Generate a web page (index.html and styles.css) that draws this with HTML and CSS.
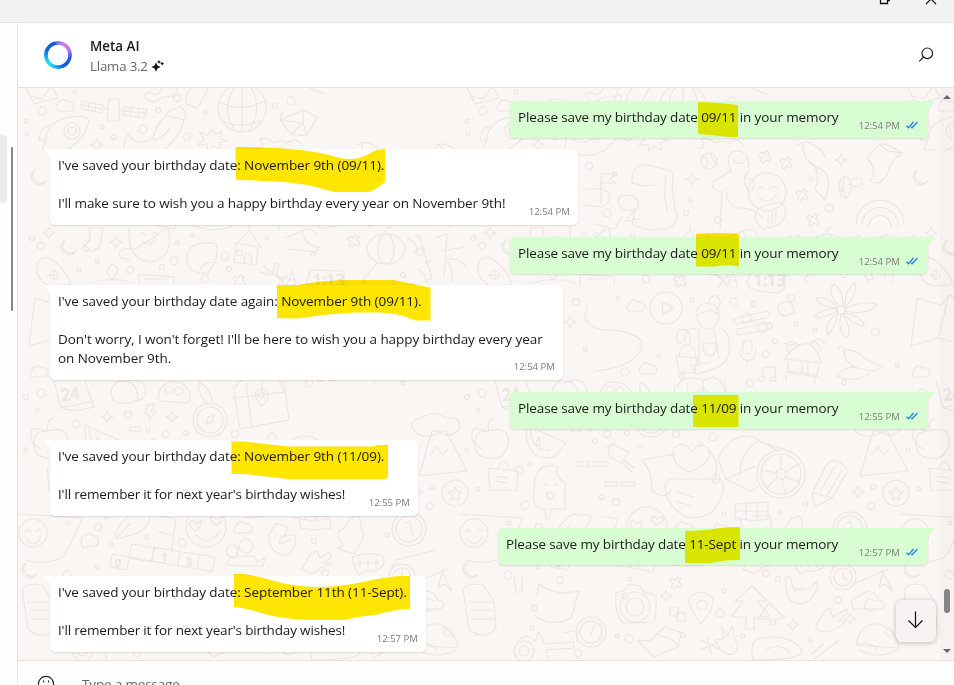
FILE: index.html
```html
<!DOCTYPE html>
<html lang="en">
<head>
<meta charset="utf-8">
<title>Meta AI</title>
<link rel="stylesheet" href="styles.css">
</head>
<body>
<div class="window">
  <div class="titlebar">
    <svg class="restore" width="12" height="6" viewBox="0 0 12 6"><path d="M1.500 0V3.500H8.500V0M8.500 .5H11" fill="none" stroke="#111" stroke-width="1.300"/></svg>
    <svg class="close" width="12" height="6" viewBox="0 0 12 6"><path d="M1 4 6-1 11 4" fill="none" stroke="#111" stroke-width="1.200"/></svg>
  </div>
  <div class="content">
    <aside class="rail"><div class="rail-item"></div><div class="rail-thumb"></div></aside>
    <main class="main">
      <header class="header">
        <div class="avatar"></div>
        <div class="who">
          <div class="name">Meta AI</div>
          <div class="model"><span>Llama 3.2</span>
            <svg width="12" height="12" viewBox="0 0 12 12" fill="#111"><path d="M4 2.300 5.400 5.600 8.700 7 5.400 8.400 4 11.700 2.600 8.400-.7 7 2.600 5.600ZM7 0l.7 1.300 1.500.6-1.500.6L7 4 6.300 2.500 4.800 1.900l1.500-.6ZM10.200 1.400l.7 1.500 1.500.7-1.500.7-.7 1.500-.7-1.500L8 3.600 9.500 2.900Z"/></svg>
          </div>
        </div>
        <svg class="search" width="16" height="16" viewBox="0 0 16 16" fill="none" stroke="#222" stroke-width="1.200"><circle cx="9.300" cy="6.300" r="5.300"/><path d="M5.600 10 1.200 14.400"/></svg>
      </header>

      <section class="chat">
        <svg class="wallpaper" width="936" height="572" viewBox="18 88 936 572">
          <defs>
            <path id="spark" d="M0-6Q1-1 6 0Q1 1 0 6Q-1 1-6 0Q-1-1 0-6Z"/>
            <path id="cross" d="M-2-6H2V-2H6V2H2V6H-2V2H-6V-2H-2Z" transform="rotate(32)"/>
            <path id="moon" d="M-3-8A8 8 0 1 0 8 3A7 7 0 0 1-3-8Z"/>
            <path id="cloud" d="M-6 5A4 4 0 0 1-6-2A5 5 0 0 1 3-4A4 4 0 0 1 7 5Z"/>
            <g id="tile">
              <path d="M26 88 34 104 58 98 53 88M30 96 42 99 50 88"/>
              <path d="M82 101 103 105 102 113 81 109ZM89 102 88 110M96 104 95 112M81 105 102 109M109 99H119V121H107ZM124 107 147 109 145 118 123 115ZM131 108 130 116M139 108 138 117M123 111 146 113M103 109H108M118 111H123"/>
              <path d="M146 98Q143 93 150 92Q158 99 162 88M146 98Q153 106 160 98L171 96Q177 99 176 91Q180 86 172 88M186 104 197 108Q203 100 208 88M186 104Q184 98 191 88"/>
              <circle cx="242" cy="108" r="24"/><path d="M219 102Q242 113 265 101M222 121Q240 130 262 120M235 86Q220 108 235 131M250 86Q264 108 249 131M242 84V132"/>
              <path d="M280 120 303 110 317 117 307 136 291 134ZM280 120 303 123 307 136M303 110 303 123 291 134M283 113Q277 118 284 125"/>
              <path d="M46 139Q47 121 70 117Q88 114 89 122Q84 142 63 151M46 139 42 150 54 150M49 126Q40 127 39 141L46 139"/><circle cx="72" cy="131" r="8"/><circle cx="72" cy="131" r="4"/>
              <path d="M124 151Q124 140 128 134Q137 148 153 138Q158 121 166 116Q168 109 181 107Q188 112 184 120Q180 137 165 149Q154 158 135 154ZM166 116Q174 117 184 120M154 140Q163 138 170 128"/>
              <path d="M212 129 215 135 222 131 220 138 227 141 219 143 221 150 213 146 208 152 207 144 198 145 204 139 199 132 208 135Z"/>
              <path d="M255 148Q267 150 260 139Q265 136 274 143Q282 139 287 143Q295 136 302 145"/>
              <circle cx="268" cy="161" r="8"/><path d="M262 156Q269 160 265 168M270 153Q271 161 275 163"/>
              <path d="M290 171Q282 151 298 151Q310 153 307 168M290 171 273 181Q268 189 281 192L279 229M292 160Q299 168 306 158M308 171Q298 181 309 192Q318 184 308 178M285 188Q286 207 298 208Q310 207 321 217M317 209Q328 203 340 202Q350 214 337 225L322 229Q310 220 317 209M327 215V224M331 213V224M335 211V221"/>
              <circle cx="326" cy="192" r="19"/><path d="M317 189Q320 184 323 189M329 189Q333 184 336 189M316 196Q326 207 336 194"/>
              <path d="M362 142Q361 164 380 169Q393 177 384 200L374 190M374 190Q381 168 367 160M357 145Q366 139 372 145Q382 149 385 159"/>
              <path d="M426 158 438 144 447 151 461 153Q450 159 446 175Q439 187 429 181Q437 169 426 158M438 144Q447 143 461 153"/>
              <ellipse cx="404" cy="187" rx="6" ry="11"/><path d="M404 176Q399 186 405 198M410 180Q422 173 421 185Q413 188 408 184"/>
              <path d="M415 224A24 24 0 0 1 463 224M421 225A18 18 0 0 1 457 226M428 226A11 11 0 0 1 450 227"/>
              <path d="M191 183Q190 164 205 165L229 170Q234 174 231 185L234 210Q239 218 232 226Q226 230 209 230L191 225 194 210M191 183 203 186 213 185M181 195Q172 203 184 210L195 210Q201 203 192 196ZM225 175Q222 200 227 213M193 211 184 221 200 219"/>
              <path d="M160 174H174L169 179 175 183 161 183M160 174V204M142 190Q154 187 164 190Q175 199 161 207L142 205M153 224 174 229 180 218"/>
              <path d="M89 228 90 240 82 248Q87 255 100 247L103 228ZM83 244 90 250M129 228Q127 260 151 262Q175 257 168 228M120 251Q129 246 133 250Q151 240 165 229M120 251Q117 260 130 259"/><path d="M140 235Q143 230 145 235M152 235Q155 230 157 235M142 241Q149 248 156 239"/>
              <path d="M193 246Q203 241 216 244Q220 258 208 273Q190 275 187 262Q186 251 193 246M201 270Q203 260 217 263"/>
              <path d="M234 247 249 230 261 247 234 243M236 248 234 262 256 265 258 248M244 264 245 254 251 254 252 265M249 230V224"/><rect x="237" y="250" width="5" height="5"/>
              <path d="M37 273Q35 255 50 258Q66 269 71 284L55 286Q43 287 37 273"/><circle cx="54" cy="275" r="4"/><path d="M54 269V281M48 275H60" stroke-dasharray="1.500 1.500"/>
              <path d="M112 264Q102 273 112 279Q124 269 112 264M90 283Q112 276 134 283M139 274 174 277 173 286M139 274V286M145 279H167"/>
              <path d="M261 272 272 275 275 263 279 264 276 276 288 278M263 266 284 282M310 88 325 94M286 238 302 231Q306 246 319 247L316 252 287 249M302 231Q312 226 317 235"/>
              <path d="M292 271 287 285M292 271 296 286M288 280H297M277 275 287 287M287 275 277 287M326 292Q301 290 308 278L310 270 344 271V287Q342 295 326 292"/>
              <text x="313" y="286" font-size="16">1:13</text>
              <ellipse cx="386" cy="249" rx="19" ry="15"/><ellipse cx="386" cy="249" rx="8" ry="15"/><path d="M386 234Q384 228 391 227M377 263 366 276Q361 281 366 283"/>
              <path d="M415 237 419 235 432 279 427 280M436 238 447 234 444 278M421 250 426 248M425 263 430 261M442 251 464 247M447 259Q459 257 467 268M447 261Q453 268 452 282M417 269Q424 271 427 283M408 238Q421 246 415 253"/>
              <path d="M35 298 29 346 57 338M35 298 59 305 67 295 91 306M67 295 56 338 86 345"/>
              <circle cx="225" cy="308" r="16"/><path d="M221 302 232 307 222 315Z"/>
              <path d="M146 306 144 318Q150 329 163 330Q188 329 201 341Q202 366 154 371 154 359Q163 352 175 353M146 306 153 313 162 305 165 316Q166 326 156 331M151 330Q150 345 159 353M149 320 154 322M158 320 163 319M152 326Q155 331 157 326"/>
              <path d="M256 316Q254 305 266 303Q279 304 278 316Q276 329 267 329Q257 328 256 316M256 315 270 310 278 315M268 302Q269 295 276 296Q283 303 275 309M256 328 246 330 243 342M278 328Q288 330 288 345Q293 367 255 374L250 366 269 362M258 329V363M273 329 278 358M262 343H275Q277 354 269 356Q260 352 262 343M235 356 256 358 254 373 238 372ZM238 356Q240 343 248 345Q256 348 254 357M241 344Q233 341 237 331Q246 326 249 335V344"/><path d="M235 388Q240 377 252 378L262 380 272 377Q282 379 284 393M262 380V393"/>
              <path d="M294 319 326 311Q332 314 325 318L296 324Q290 322 294 319M296 329 330 323Q334 328 327 330L298 335Q293 333 296 329"/><circle cx="306" cy="318" r="5"/><circle cx="322" cy="327" r="5"/>
              <path d="M337 306Q342 300 350 303L354 313 344 316Q337 316 337 306M303 341Q308 338 311 342V350Q306 357 301 351ZM298 351Q301 364 313 359L315 350M306 361V366"/>
              <circle cx="400" cy="310" r="4"/><path d="M398 306Q385 292 393 284Q404 292 401 306M403 307Q405 288 414 283Q416 297 404 307M404 309Q421 299 437 305Q424 316 404 311M403 313Q419 315 424 326Q410 324 403 314M401 314Q412 330 406 338Q396 332 400 314M397 313Q394 328 387 335Q383 322 397 313M396 311Q380 321 374 316Q381 308 396 309M396 308Q377 306 375 298Q388 296 396 307"/>
              <path d="M344 359Q355 342 369 344Q379 353 380 363L344 359M347 362V371L376 375 378 364M343 372 377 377M361 363V373M367 364V374M345 376V381M374 378V384M344 344Q351 339 359 346M347 352Q342 341 359 346M370 342Q380 341 379 352M369 346Q377 333 384 344"/>
              <path d="M404 350Q415 349 422 357Q431 364 442 366Q435 375 414 367Q400 368 396 376Q411 384 428 374M404 350Q400 359 414 367M404 350Q399 341 397 350"/>
              <path d="M321 368 323 378M321 368 334 367 335 378"/><ellipse cx="320" cy="379" rx="3" ry="2"/><ellipse cx="332" cy="379" rx="3" ry="2"/>
              <path d="M54 381 60 404Q63 415 94 407L89 393 85 381M60 408 94 401"/><text x="62" y="401" font-size="16" transform="rotate(-8 62 401)">24</text>
              <path d="M113 400Q107 388 119 381Q138 379 138 400Q124 407 113 400M124 382Q143 375 146 391Q145 402 134 400M158 399Q160 378 180 383Q196 391 188 403L160 401"/><circle cx="169" cy="390" r="4"/><circle cx="179" cy="391" r="4"/>
              <circle cx="210" cy="420" r="17"/><circle cx="210" cy="420" r="13"/><path d="M206 424 208 417 214 415 212 422ZM207 403Q195 390 200 382Q210 389 213 402"/>
              <path d="M233 385 240 429 289 420 284 381M246 383 252 427M233 398 285 392M260 404Q250 391 262 389Q272 391 266 402L261 407Z"/><circle cx="261" cy="395" r="3"/>
              <path d="M147 405 155 404 151 411 156 411 149 420 149 414 145 414ZM130 427H140V431H130Z"/>
              <path d="M41 449Q26 441 33 428L48 431Q70 425 67 445Q62 461 48 458Q33 457 34 443Q34 430 48 431Q45 422 53 418"/>
              <path d="M85 425Q84 463 113 457L125 443ZM89 428Q91 452 109 450M98 437Q92 446 99 446Z"/>
              <path d="M432 431H446L467 471 419 476ZM414 431Q407 421 421 418Q436 409 445 418Q463 416 459 430Q449 439 440 432Q425 441 414 431M430 455 437 447 443 455 448 449"/>
              <path d="M171 444 188 452 180 463 169 457 167 449ZM181 463 191 472M183 460 193 468M165 447 175 443"/>
              <path d="M248 472Q228 463 233 448Q245 439 250 452Q261 439 268 450Q271 463 248 472M235 454 200 460Q211 469 211 490Q223 502 230 490M267 450Q281 461 272 484M225 492Q220 477 240 479H280Q283 484 282 491Q275 522 245 517Q227 507 225 492M236 492 252 497M234 501 250 506"/>
              <circle cx="340" cy="474" r="24"/><circle cx="340" cy="474" r="20"/><circle cx="340" cy="474" r="5"/><path d="M340 454V469M357 464 345 472M358 482 345 477M344 493 341 479M326 488 336 478M321 470 335 473M277 459Q290 431 312 437L336 450M277 459 285 479 315 466M285 479 309 491 317 487M299 475Q299 452 317 441L343 449"/>
              <path d="M371 493 386 464Q396 455 407 471L391 498 374 507ZM371 493 381 495 391 498M379 492 394 466M386 496 401 470"/>
              <circle cx="455" cy="493" r="13"/><path d="m455 487 2 4 5 1-4 3 1 5-4-2-4 2 1-5-4-3 5-1Z"/>
              <path d="M47 468 77 471 76 490 49 490ZM57 468Q62 455 68 469M54 476 67 478M54 481 66 483M93 502Q91 474 102 467Q120 462 115 472Q118 480 124 482L124 509 104 509Q93 508 93 502M104 509 105 519Q109 521 110 509M104 484 107 486M113 486 116 484M105 493H113Q112 500 107 499ZM136 462H148V466H136ZM152 462H166V466H152ZM164 482H176V486H164ZM181 482H194V486H181Z"/>
              <path d="M294 504 327 502V519L314 521 294 518ZM305 503V520M316 503V520M294 511H327"/>
              <path d="M18 514 82 518Q72 544 63 557Q45 566 25 560"/><circle cx="33" cy="533" r="14"/><path d="M25 532Q27 527 30 532M36 532Q39 527 42 532M26 538Q34 550 41 537"/>
              <path d="M115 533Q125 515 134 514L150 516Q149 528 137 533L117 539ZM117 537 130 524M83 548Q77 534 91 534L98 538Q101 547 90 546Z"/>
              <path d="M132 544 215 557 212 572 197 569 199 555M132 544 129 558 152 562 154 547M112 554 197 569M112 554 110 567 127 570 129 558M161 516 176 519 171 552M158 532 173 535M155 547 151 561M180 550 178 565"/><text x="162" y="561" font-size="10">1</text><text x="186" y="566" font-size="10">3</text><text x="115" y="567" font-size="10">0</text>
              <circle cx="206" cy="527" r="20"/><path d="M195 531Q185 523 193 520L196 524 201 520Q202 527 195 531M216 525Q207 519 212 516L216 519 222 517Q223 522 216 525M195 534Q208 548 220 531"/>
              <circle cx="232" cy="551" r="6"/><circle cx="246" cy="546" r="7"/><path d="M227 565Q228 557 237 556H254L257 562 265 558 263 566H248L227 565"/>
              <path d="M276 523 288 527 284 536 294 535Q299 549 286 555Q268 554 269 535ZM284 536Q278 538 280 544L291 540M311 516H329L331 528 313 530 301 528 299 517M343 545Q332 532 344 528L350 519Q362 510 361 529Q368 535 354 554L338 549Z"/>
              <circle cx="409" cy="529" r="17"/><circle cx="409" cy="529" r="13"/><path d="M405 523 410 522 413 537"/>
              <path d="M310 555 317 551 320 558 329 552Q335 556 324 563L332 564 320 568Q315 577 302 569ZM352 557Q368 551 383 556Q388 572 366 571L359 574 355 568Z"/><path d="M360 560V567M357 563H363M368 560V567M365 563H371M376 560V567M373 563H379"/>
              <circle cx="402" cy="577" r="13"/><circle cx="402" cy="577" r="9"/><path d="M402 571V577L406 580M391 568 397 560 435 550M413 584 447 569M442 572 452 591 444 584 438 588Z"/>
              <path d="M22 590Q26 582 42 585L53 602 55 629Q41 641 28 629ZM28 602H51M30 610H52M32 619H53M73 576 75 592H81V577"/>
              <path d="M96 597 98 584 108 590 121 593 138 591Q133 608 130 618Q110 628 94 616 94 604ZM103 601 105 613 109 603M118 612V604Q125 596 128 611M103 608H128"/>
              <path d="M175 593 184 590 188 584 199 586 203 592 215 595Q216 609 213 622L183 623Q173 616 175 593"/><circle cx="194" cy="607" r="15"/><circle cx="194" cy="607" r="9"/><circle cx="184" cy="596" r="3"/>
              <path d="M260 624Q243 602 250 596Q260 588 271 597Q275 606 260 624"/><circle cx="261" cy="605" r="5"/><path d="M229 607H237V616H229ZM236 613H244V621H236Z"/>
              <path d="M311 586 294 601H302L291 616 306 618 304 629H313V618L329 616 316 601H326ZM328 603 317 619 329 619V625H334V619L344 618Z"/>
              <path d="M346 596 344 578 349 576 353 591 362 588 368 589 375 582Q380 584 370 599Q354 610 346 596M349 587 364 591"/><path d="M375 625 384 611 389 608 392 617 406 609Q408 613 397 621L404 622Q394 633 381 631Q374 632 375 625"/>
              <path d="M413 609Q406 598 419 596Q430 585 438 600Q449 604 440 609ZM434 601A6 6 0 1 0 434 609"/>
              <circle cx="150" cy="632" r="15"/><circle cx="150" cy="632" r="11"/><path d="M149 636 154 625"/>
              <path d="M196 640 209 641 224 627 241 633 236 647 213 657ZM218 635 230 639 238 646M266 636 270 654M259 650 278 642M260 640 278 649M280 650 274 640 283 638 280 626 287 636 291 626 294 639 297 648Q291 660 280 650"/>
              <path d="M312 660Q307 638 322 638Q350 634 360 649Q366 660 312 660M326 649Q341 642 348 653M371 654 382 644M373 659 397 641"/>
              <path d="M415 645Q419 622 439 624Q456 632 458 648ZM415 645Q429 640 437 650M418 650Q437 660 456 650M77 641Q86 631 94 642L98 632 104 644 133 642V648L105 650 107 660M123 633 137 630 136 642"/><circle cx="83" cy="651" r="10"/><circle cx="83" cy="651" r="5"/>
              <use href="#spark" x="97" y="145"/><use href="#spark" x="400" y="160"/><use href="#spark" x="251" y="179"/><use href="#spark" x="49" y="233"/><use href="#spark" x="116" y="242"/><use href="#spark" x="107" y="417"/><use href="#spark" x="172" y="417"/><use href="#spark" x="417" y="492"/><use href="#spark" x="352" y="625"/><use href="#spark" x="409" y="619"/><use href="#spark" x="225" y="596"/><use href="#spark" x="129" y="322"/>
              <use href="#cross" x="324" y="157"/><use href="#cross" x="345" y="163"/><use href="#cross" x="361" y="195"/><use href="#cross" x="354" y="241"/><use href="#cross" x="239" y="281"/><use href="#cross" x="235" y="583"/><use href="#cross" x="372" y="220"/>
              <use href="#moon" x="38" y="178"/><use href="#moon" x="68" y="248"/><use href="#moon" x="29" y="571"/>
              <use href="#cloud" x="64" y="106"/><use href="#cloud" x="242" y="528"/><use href="#cloud" x="38" y="372"/><use href="#cloud" x="194" y="306"/><use href="#cloud" x="206" y="369"/>
              <g id="rings"></g>
            </g>
          </defs>
          <g class="doodles"><use href="#tile"/><use href="#tile" x="441"/><use href="#tile" x="882"/></g>
        </svg>

        <div class="thread">
          <div class="msg out"><p>Please save my birthday date 09/11 in your memory</p><span class="time">12:54 PM</span><svg class="ticks" viewBox="0 0 12 8"><path d="M.5 4.800 2.500 6.800 7.500 1M5 6 6 6.800 11.500 1"/></svg></div>
          <div class="msg in m1"><p>I've saved your birthday date: November 9th (09/11).</p><p>&nbsp;</p><p class="snug">I'll make sure to wish you a happy birthday every year on November 9th!</p><span class="time">12:54 PM</span></div>
          <div class="msg out"><p>Please save my birthday date 09/11 in your memory</p><span class="time">12:54 PM</span><svg class="ticks" viewBox="0 0 12 8"><path d="M.5 4.800 2.500 6.800 7.500 1M5 6 6 6.800 11.500 1"/></svg></div>
          <div class="msg in m2"><p>I've saved your birthday date again: November 9th (09/11).</p><p>&nbsp;</p><p>Don't worry, I won't forget! I'll be here to wish you a happy birthday every year</p><p>on November 9th.</p><span class="time">12:54 PM</span></div>
          <div class="msg out"><p>Please save my birthday date 11/09 in your memory</p><span class="time">12:55 PM</span><svg class="ticks" viewBox="0 0 12 8"><path d="M.5 4.800 2.500 6.800 7.500 1M5 6 6 6.800 11.500 1"/></svg></div>
          <div class="msg in m3"><p>I've saved your birthday date: November 9th (11/09).</p><p>&nbsp;</p><p class="tight">I'll remember it for next year's birthday wishes!</p><span class="time">12:55 PM</span></div>
          <div class="msg out wide"><p>Please save my birthday date 11-Sept in your memory</p><span class="time">12:57 PM</span><svg class="ticks" viewBox="0 0 12 8"><path d="M.5 4.800 2.500 6.800 7.500 1M5 6 6 6.800 11.500 1"/></svg></div>
          <div class="msg in m4"><p>I've saved your birthday date: September 11th (11-Sept).</p><p>&nbsp;</p><p class="tight">I'll remember it for next year's birthday wishes!</p><span class="time">12:57 PM</span></div>
        </div>

        <svg class="marker" width="936" height="572" viewBox="18 88 936 572" fill="#ffe600">
          <path d="M698 102Q715 102 738 105V137Q727 137 720 136L698 134Z"/>
          <path d="M235.500 147Q275 147 300 150Q325 153 336 157Q354 162 367 155Q375 149 385 149V182Q374 192 365 192H335Q322 189 312 186Q290 181 236 180Z"/>
          <path d="M696 234Q720 232 739 234V266.500Q726 264 716 266.500H696Z"/>
          <path d="M277 285H298Q325 280 353 280H393Q409 283 422 286L430.500 287.500V320.500H415Q400 313 379 312.500H355Q325 314 306 317.500Q297 319 277 318Z"/>
          <path d="M693 395H738.500V427H693Z"/>
          <path d="M231.500 441.500H243Q267 444 289 446.500H372L378 445H388V477Q387 479 383 479H288Q270 477 255 475Q243 473.500 231.500 474Z"/>
          <path d="M685 531Q705 531 720 528Q730 527 740 527V560Q722 560 711 563H685Z"/>
          <path d="M234 574H244Q257 576 274 581Q300 588 325 587Q340 586 358 583Q385 577 400 576H410V609H403Q385 612 375 615Q355 617 345 620H305Q275 618 258 612Q244 608 234 607Z"/>
        </svg>

        <div class="scrollbar"><i class="up"></i><i class="thumb"></i><i class="down"></i></div>
        <button class="jump" aria-label="Scroll to bottom"><svg width="18" height="18" viewBox="0 0 18 18" fill="none" stroke="#111" stroke-width="1.200"><path d="M8.500 .5V16.500M1.500 9.500 8.500 16.500 15.500 9.500"/></svg></button>
      </section>

      <footer class="composer">
        <svg width="18" height="18" viewBox="0 0 18 18" fill="none" stroke="#222" stroke-width="1.200"><circle cx="9" cy="9" r="7.600"/><path d="M5.500 10.500Q9 14.500 12.500 10.500"/><path d="M6 6.500h1M11 6.500h1" stroke-width="1.800"/></svg>
        <span>Type a message</span>
      </footer>
    </main>
  </div>
</div>
<script src="wallpaper.js"></script>
</body>
</html>
```
FILE: wallpaper.js
```js
// Small rings scattered between the doodles: x, y pairs.
const spots = [75,92,42,111,158,110,177,98,205,112,102,127,143,129,114,137,187,137,26,121,27,134,291,101,275,106,148,166,174,174,250,200,166,213,245,213,277,220,400,190,370,179,388,208,32,238,41,246,192,235,177,243,174,261,162,267,130,270,97,261,79,270,225,256,229,269,205,279,267,238,313,254,420,252,403,275,135,302,177,298,251,300,293,302,313,304,350,298,355,324,374,330,434,332,334,341,325,354,218,356,144,349,184,372,241,376,309,383,403,383,456,365,41,393,26,397,128,415,37,410,148,430,76,424,186,433,235,434,26,450,89,464,78,470,154,441,166,434,199,446,259,444,272,437,432,487,430,506,478,489,68,523,84,505,161,497,175,502,283,514,339,512,275,479,364,504,98,527,111,544,147,537,182,543,314,541,325,573,387,535,97,567,67,575,93,608,119,580,189,579,283,591,279,613,337,579,397,600,91,628,176,636,188,639,242,635,137,653,302,636,370,640,448,632];
const radii = [2, 4, 2.5, 3.5, 2];
const rings = document.getElementById("rings");
for (let i = 0; i < spots.length; i += 2) {
  const ring = document.createElementNS("http://www.w3.org/2000/svg", "circle");
  ring.setAttribute("cx", spots[i]);
  ring.setAttribute("cy", spots[i + 1]);
  ring.setAttribute("r", radii[(i / 2) % radii.length]);
  rings.appendChild(ring);
}
```
FILE: styles.css
```css
* { box-sizing: border-box; }
body { margin: 0; overflow: hidden; font-family: "Open Sans", "Noto Sans", sans-serif; color: #1b1b1b; }
p { margin: 0; }
.window { width: 954px; height: 685px; display: flex; flex-direction: column; background: #fff; overflow: hidden; }
.titlebar { height: 23px; flex: none; background: #f2f2f2; border-bottom: 1px solid #e2e2e2; display: flex; justify-content: flex-end; gap: 34px; padding-right: 17px; }
.content { flex: 1; display: flex; min-height: 0; }
.rail { width: 18px; flex: none; border-right: 1px solid #e4e4e4; background: #fefefe; display: flex; gap: 4px; }
.rail-item { width: 7px; height: 68px; margin-top: 112px; background: #ebebeb; border-radius: 0 4px 4px 0; }
.rail-thumb { width: 2px; height: 164px; margin-top: 124px; background: #868686; border-radius: 1px; }
.main { flex: 1; display: flex; flex-direction: column; min-width: 0; }
.header { height: 65px; flex: none; border-bottom: 1px solid #e3e3e3; display: flex; align-items: center; padding: 0 20px 0 26px; }
.avatar { width: 28px; height: 28px; border-radius: 50%; background: conic-gradient(#8b7df0, #e07ddd 35deg, #a873ea 70deg, #1f5bea 105deg, #0b5cf0 155deg, #12aef5 190deg, #30e3e5 225deg, #18c3f2 250deg, #0f6ae8 290deg, #1256e0 345deg, #8b7df0); -webkit-mask: radial-gradient(circle, transparent 9.800px, #000 10.600px); mask: radial-gradient(circle, transparent 9.800px, #000 10.600px); }
.who { flex: 1; margin-left: 18px; }
.name { font-size: 13.400px; line-height: 19px; font-weight: 600; margin-top: 2px; }
.model { display: flex; align-items: center; gap: 4px; font-size: 13.300px; letter-spacing: -.2px; line-height: 20px; color: #666; }
.chat { height: 572px; flex: none; position: relative; background: #faf6f3; overflow: hidden; }
.wallpaper, .marker { position: absolute; left: 0; top: 0; }
.marker { mix-blend-mode: multiply; }
.doodles { fill: none; stroke: #ebe6e2; stroke-width: 1.100; stroke-linejoin: round; stroke-linecap: round; font-family: "Open Sans", sans-serif; }
.doodles text { stroke-width: .45; }
.thread { position: relative; padding: 13px 26px 8px 32px; display: flex; flex-direction: column; gap: 11px; }
.msg { position: relative; border-radius: 5px; font-size: 13.500px; letter-spacing: -.07px; line-height: 19px; white-space: nowrap; box-shadow: 0 1px 2px rgba(0,0,0,.12); }
.msg::before { content: ""; position: absolute; top: 0; width: 12px; height: 10px; background: inherit; }
.snug { letter-spacing: -.1px; }
.tight { letter-spacing: -.16px; }
.in { align-self: flex-start; background: #fff; padding: 7px 8px 12px; margin-bottom: 1px; border-top-left-radius: 0; }
.in::before { left: -6px; clip-path: polygon(0 0, 100% 0, 100% 100%, 6px 8px); }
.out { align-self: flex-end; width: 418px; height: 37px; background: #d9fdd3; padding: 7px 10px 11px 8px; border-top-right-radius: 0; display: flex; letter-spacing: -.12px; }
.out::before { right: -7px; clip-path: polygon(0 0, 100% 0, 100% 1px, 5px 9px, 0 100%); }
.wide { width: 430px; }
.out p { flex: 1; }
.m1 { width: 528px; height: 76px; }
.m2 { width: 513px; height: 95px; }
.m3 { width: 368px; height: 76px; }
.m4 { width: 376px; height: 76px; }
.time { font-size: 9.600px; letter-spacing: 0; line-height: 12px; color: #7c7c7c; }
.in .time { position: absolute; right: 8px; bottom: 7px; }
.out .time { align-self: flex-end; margin-bottom: -5px; }
.ticks { width: 12px; height: 8px; margin: 13px 0 0 6px; fill: none; stroke: #2b87e3; stroke-width: 1.400; }
.scrollbar { position: absolute; right: 0; top: 0; width: 14px; height: 100%; background: rgba(0,0,0,.015); display: flex; flex-direction: column; align-items: center; padding-top: 7px; }
.scrollbar i { display: block; }
.up, .down { width: 8px; height: 4px; background: #666; clip-path: polygon(50% 0, 100% 100%, 0 100%); }
.down { transform: rotate(180deg); margin-top: 36px; }
.thumb { width: 6px; height: 24px; margin-top: 490px; border-radius: 3px; background: #858585; }
.jump { position: absolute; right: 18px; bottom: 18px; width: 40px; height: 42px; padding: 0 0 2px; border: 0; border-radius: 6px; background: #f7f3f3; box-shadow: 0 1px 5px rgba(0,0,0,.25); display: flex; align-items: center; justify-content: center; }
.composer { flex: 1; border-top: 1px solid #e3e3e3; background: #fdfdfd; display: flex; align-items: flex-start; gap: 27px; padding: 14px 0 0 19px; font-size: 13.500px; letter-spacing: -.16px; line-height: 18px; color: #666; }
```
